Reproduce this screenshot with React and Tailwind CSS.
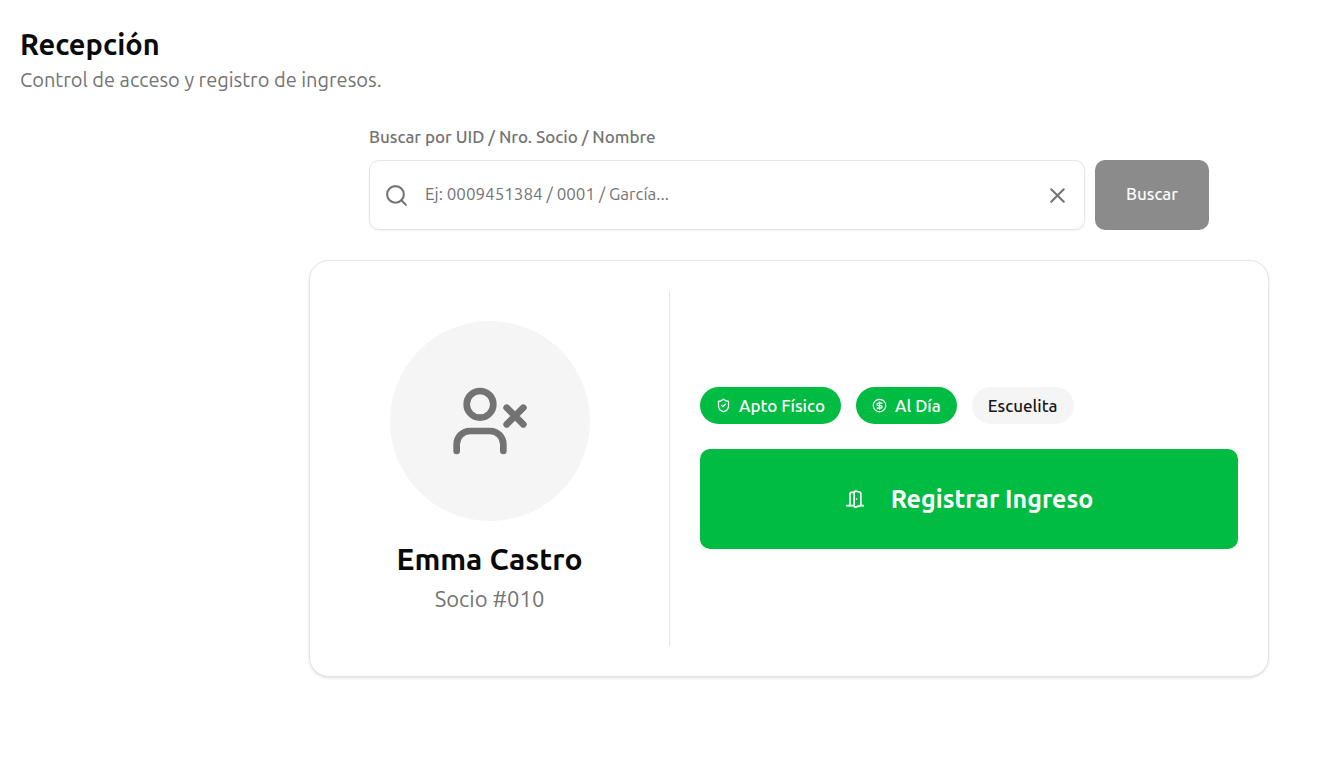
import { Search, X, UserX, ShieldCheck, CircleDollarSign, DoorOpen } from 'lucide-react';

function Badge({ icon: Icon, children, className }) {
  return (
    <span className={`inline-flex items-center gap-2 rounded-full px-4 py-[6px] text-[17px] leading-[25px] font-medium ${className}`}>
      {Icon && <Icon className="size-[15px]" aria-hidden="true" />}
      {children}
    </span>
  );
}

export default function App() {
  return (
    <div className="min-h-screen bg-white px-5 pt-6 font-['Ubuntu','Noto_Sans',sans-serif] text-[#0a0a0a]">
      <header>
        <h1 className="text-[29px] leading-10 font-semibold">Recepción</h1>
        <p className="text-[20px] leading-8 text-[#737373]">Control de acceso y registro de ingresos.</p>
      </header>
      <main className="mt-7 mr-[34px] ml-auto max-w-[960px]">
        <form className="px-[60px]" onSubmit={(e) => e.preventDefault()}>
          <label htmlFor="member-search" className="block text-[17px] leading-[26px] font-medium text-[#737373]">
            Buscar por UID / Nro. Socio / Nombre
          </label>
          <div className="mt-[10px] flex gap-[10px]">
            <div className="flex h-[70px] min-w-0 flex-1 items-center rounded-[10px] border border-[#e5e5e5] px-[14px] shadow-xs">
              <Search className="size-[25px] shrink-0 text-[#737373]" aria-hidden="true" />
              <input
                id="member-search"
                type="text"
                placeholder="Ej: 0009451384 / 0001 / García..."
                className="min-w-0 flex-1 bg-transparent px-4 pb-[3px] text-[17px] leading-6 outline-none placeholder:text-[#737373]"
              />
              <button type="button" aria-label="Limpiar" className="shrink-0 text-[#737373]">
                <X className="size-[25px]" />
              </button>
            </div>
            <button type="submit" className="h-[70px] w-[114px] rounded-[10px] bg-[#8b8b8b] pb-[3px] text-[17px] leading-6 font-medium text-[#fafafa]">
              Buscar
            </button>
          </div>
        </form>
        <section className="mt-[30px] flex rounded-[20px] border border-[#e5e5e5] bg-white py-[30px] shadow-sm">
          <div className="flex w-[360px] shrink-0 flex-col items-center border-r border-[#e5e5e5] py-[30px]">
            <div className="flex size-[200px] items-center justify-center rounded-full bg-[#f5f5f5] text-[#737373]">
              <UserX className="size-20" aria-hidden="true" />
            </div>
            <h2 className="mt-5 text-[30px] leading-9 font-semibold">Emma Castro</h2>
            <p className="mt-1 text-[22px] leading-[35px] text-[#737373]">Socio #010</p>
          </div>
          <div className="flex min-w-0 flex-1 flex-col justify-center gap-[25px] px-[30px] pb-[2px]">
            <div className="flex flex-wrap gap-[15px]">
              <Badge icon={ShieldCheck} className="bg-[#00bc42] text-white">Apto Físico</Badge>
              <Badge icon={CircleDollarSign} className="bg-[#00bc42] text-white">Al Día</Badge>
              <Badge className="bg-[#f5f5f5] text-[#171717]">Escuelita</Badge>
            </div>
            <button type="button" className="flex h-[100px] w-full items-center justify-center gap-[26px] rounded-[10px] bg-[#00bc42] text-[25px] leading-9 font-semibold text-white">
              <DoorOpen className="size-5" aria-hidden="true" />
              Registrar Ingreso
            </button>
          </div>
        </section>
      </main>
    </div>
  );
}
